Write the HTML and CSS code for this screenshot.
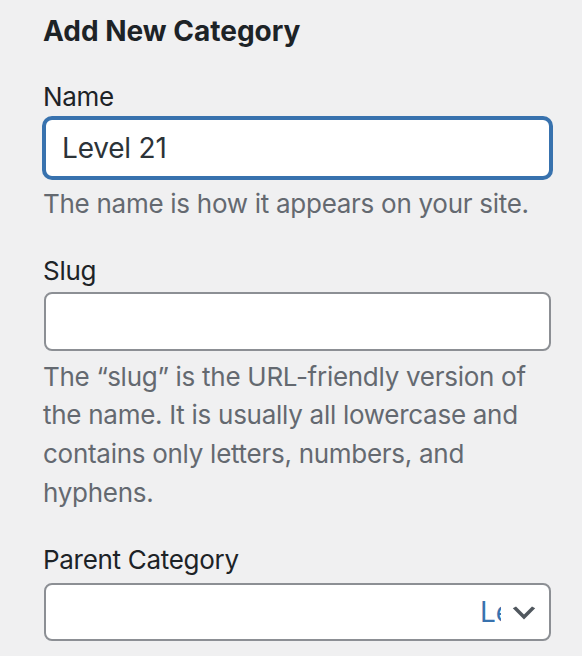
FILE: index.html
```html
<!DOCTYPE html>
<html lang="en">
<head>
<meta charset="utf-8">
<title>Add New Category</title>
<link rel="stylesheet" href="styles.css">
</head>
<body>
<div class="form-wrap">
  <h2 class="form-title">Add New Category</h2>
  <div class="form-field">
    <label class="field-label" for="tag-name">Name</label>
    <input class="text-input is-focused" id="tag-name" type="text" value="Level 21">
    <p class="description">The name is how it appears on your site.</p>
  </div>
  <div class="form-field">
    <label class="field-label" for="tag-slug">Slug</label>
    <input class="text-input slug-input" id="tag-slug" type="text" value="">
    <p class="description">The “slug” is the URL-friendly version of the name. It is usually all lowercase and contains only letters, numbers, and hyphens.</p>
  </div>
  <div class="form-field">
    <label class="field-label">Parent Category</label>
    <div class="select-box">
      <span class="select-value">Level 21</span>
      <svg class="select-chevron" viewBox="0 0 20 20" width="32" height="32" aria-hidden="true"><path d="M5 6l5 5 5-5 2 1-7 7-7-7 2-1z" fill="#50575e"/></svg>
    </div>
  </div>
</div>
</body>
</html>
```
FILE: styles.css
```css
html, body {
  margin: 0;
  padding: 0;
  background: #f0f0f1;
}

body {
  font-family: Inter, "Noto Sans", "Liberation Sans", sans-serif;
  color: #1d2327;
}

.form-wrap {
  padding: 13px 31px 0 43px;
}

.form-title {
  margin: 0 0 30px;
  font-size: 28px;
  line-height: 36px;
  font-weight: 700;
  color: #1d2327;
}

.form-field {
  display: flex;
  flex-direction: column;
  align-items: flex-start;
  margin-bottom: 29px;
}

.field-label {
  display: block;
  font-size: 26px;
  line-height: 36px;
  letter-spacing: -0.3px;
  color: #1d2327;
  margin-bottom: 3px;
}

.text-input {
  box-sizing: border-box;
  width: 507px;
  height: 60px;
  margin: 0 0 0 1px;
  padding: 0 16px;
  border: 2px solid #8c8f94;
  border-radius: 8px;
  background: #fff;
  font-family: inherit;
  font-size: 28px;
  letter-spacing: -0.2px;
  color: #2c3338;
  outline: none;
}

.text-input.is-focused {
  border-color: #3872ae;
  box-shadow: 0 0 0 2px #3872ae;
}

.slug-input {
  height: 59px;
}

.description {
  margin: 7px 0 0;
  font-size: 26px;
  line-height: 38.7px;
  letter-spacing: -0.28px;
  color: #646970;
  width: 508px;
}

.select-box {
  box-sizing: border-box;
  width: 507px;
  height: 58px;
  margin: 2px 0 0 1px;
  padding: 0 9px 0 16px;
  border: 2px solid #8c8f94;
  border-radius: 8px;
  background: #fff;
  display: flex;
  align-items: center;
  justify-content: flex-end;
}

.select-value {
  width: 21px;
  overflow: hidden;
  white-space: nowrap;
  font-size: 28px;
  color: #3872ae;
}

.select-chevron {
  flex: none;
  margin: 3px 0 0 7px;
}
```
